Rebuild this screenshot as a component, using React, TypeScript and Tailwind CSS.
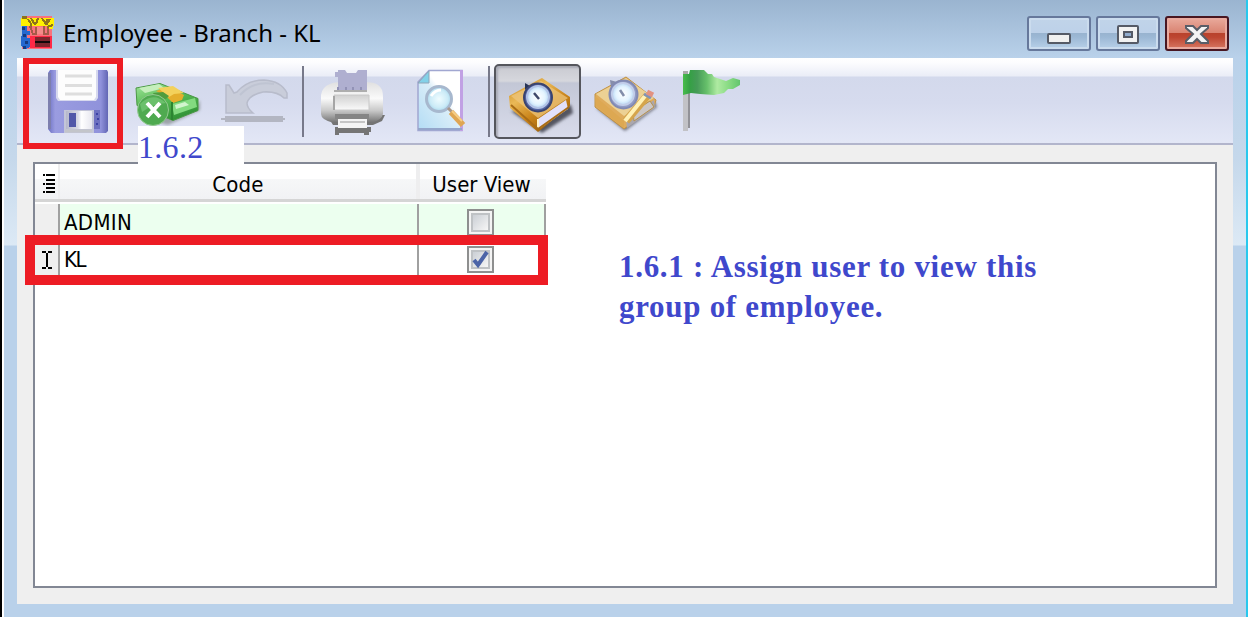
import React from "react";

const uiFont = "font-['DejaVu_Sans_Condensed','DejaVu_Sans',sans-serif] [font-stretch:condensed]";
const serif = "font-['Liberation_Serif',serif] text-[#3f48cc]";

function AppIcon() {
  return (
    <svg width="33" height="33" viewBox="21 16 33 33" shapeRendering="crispEdges">
      <rect x="22" y="16" width="30" height="33" fill="#f9727c" />
      <path d="M21 18h33v8H21zM46 24h7v5h-5z" fill="#fff000" />
      <path d="M23 18h3v-2h-3zM28 19l3 5v3M31 18l4 7M38 18l-2 6M42 18l3 5 3-4M50 19l-4 6M47 27l6-2" fill="none" stroke="#8f731a" strokeWidth="2" />
      <path d="M30 26l3 8h3v-7M44 26v8h4v-6" fill="none" stroke="#a35a48" strokeWidth="2" />
      <path d="M37 27h6v7h-6z" fill="#f58b8a" />
      <path d="M22 26h5v5h3v4h-3v3h3v9l-4 2-5-3z" fill="#2568cf" />
      <path d="M22 27h3v3h-3zM23 34h3v3h-3zM25 41h3v3h-3zM23 46h3v3h-3z" fill="#163a80" />
      <path d="M30 36h22v12H30z" fill="#ff2946" />
      <path d="M35 37h15v10H35z" fill="#7d252c" />
      <path d="M35 41h15v2H35z" fill="#12080a" />
    </svg>
  );
}

function Slot({ x, w, children }: { x: number; w: number; children: React.ReactNode }) {
  return (
    <svg className="shrink-0" width={w} height="85" viewBox={`${x} 58 ${w} 85`}>
      {children}
    </svg>
  );
}

function SaveIcon() {
  return (
    <Slot x={17} w={112}>
      <defs>
        <linearGradient id="disk" x2="1">
          <stop stopColor="#6c70c4" /><stop offset=".12" stopColor="#9a9ce0" /><stop offset=".88" stopColor="#9092db" /><stop offset="1" stopColor="#6266b4" />
        </linearGradient>
        <linearGradient id="shutter" x2="1">
          <stop stopColor="#b5b7cb" /><stop offset=".45" stopColor="#d9dae6" /><stop offset=".6" stopColor="#fff" /><stop offset="1" stopColor="#e8e8f0" />
        </linearGradient>
      </defs>
      <path d="M50 70h57l1 2v59l-2 2H51l-3-4V73z" fill="url(#disk)" />
      <path d="M48 73h3v56h-3z" fill="#7d7fae" />
      <path d="M56 70h42v28l-2 3H58l-2-3z" fill="#d7d9ee" />
      <path d="M58 70h38v27l-2 3H60l-2-3z" fill="#fdfdfd" />
      <path d="M65 76h27M65 85.500h27M65 94h27" stroke="#dedede" strokeWidth="3" />
      <path d="M64 110h30v23H64z" fill="#c3c5d8" />
      <path d="M66 111h26v18H66z" fill="url(#shutter)" />
      <rect x="69" y="113" width="7" height="14" fill="#5258a9" />
      <path d="M94 110h6v19h-6z" fill="#6d70c0" />
      <path d="M65 131h27" stroke="#c3c5ca" strokeWidth="3" />
      <path d="M96 114h2m-1 5h2m-3 5h2" stroke="#3c42a4" strokeWidth="2" />
    </Slot>
  );
}

function CancelIcon() {
  return (
    <Slot x={129} w={84}>
      <defs>
        <linearGradient id="cash" x2=".5" y2="1"><stop stopColor="#a3e69e" /><stop offset=".5" stopColor="#5abd57" /><stop offset="1" stopColor="#329437" /></linearGradient>
        <filter id="soft"><feGaussianBlur stdDeviation="1.600" /></filter>
      </defs>
      <path d="M140 118l28 7 32-15v-10l-8 12z" fill="#727a78" opacity=".6" filter="url(#soft)" />
      <path d="M136 88l24-4.500 38 15v12l-25 10-36-15z" fill="url(#cash)" stroke="#4b9845" />
      <path d="M139 88l20-4 5 4-19 5z" fill="#c5efbc" />
      <path d="M156 91l12-4 16 8-2 5-9 3-6-6z" fill="#e4ae2c" />
      <path d="M158 88l15-2 11 7-10 1-5 3z" fill="#f3d15b" />
      <path d="M153 93l10-1 6 4-3 3-11-2z" fill="#4f9c3d" />
      <path d="M172 104l23-6 2 9-23 8z" fill="#83da80" />
      <path d="M175 105l10-3 4 3-13 4z" fill="#d2f5ce" />
      <path d="M172 102v18" stroke="#2c8531" strokeWidth="2" />
      <circle cx="153" cy="110" r="15.500" fill="#4faa50" stroke="#93c990" />
      <path d="M140 104q13-13 26-1-14 1-24 9z" fill="#78c977" opacity=".7" />
      <path d="M147 103l13 14m0-14-13 14" stroke="#fff" strokeWidth="4" />
    </Slot>
  );
}

function UndoIcon() {
  return (
    <Slot x={213} w={89}>
      <path d="M226 85l3 0 5 8 3-1Q247 80 264 80q17 1 23 13v5h-3q-7-7-21-6-14 3-16 11 0 5 6 10H226z" fill="#c9cdda" stroke="#b8bccb" strokeWidth="1.500" />
      <path d="M240 95q14-15 34-11" stroke="#bfc4d2" fill="none" strokeWidth="2" />
      <path d="M221 118h4v-2h58v2h2v2h-2v2h-58v-2h-4z" fill="#b3b6c2" />
    </Slot>
  );
}

function PrinterIcon() {
  return (
    <Slot x={304} w={93}>
      <defs>
        <linearGradient id="printer" x2="0" y2="1"><stop stopColor="#e0e0e0" /><stop offset=".4" stopColor="#fafafa" /><stop offset=".7" stopColor="#c8c8c8" /><stop offset="1" stopColor="#707070" /></linearGradient>
        <linearGradient id="feed" x2="0" y2="1"><stop stopColor="#d0d0d0" /><stop offset="1" stopColor="#fafafa" /></linearGradient>
      </defs>
      <path d="M327 115h58l-3 6-9 4H333z" fill="#747474" />
      <path d="M330 84q3-2 14-2h19q12 0 15 3 5 3 5 12v17q-1 6-12 9h-37q-13-3-13-9V95q1-8 9-11z" fill="url(#printer)" />
      <path d="M335 72h3v-2h7l2 3h9l2-3h9v21h-29V77h-3z" fill="#afafd0" />
      <path d="M338 87v4m8-4v4m7-4v4m8-4v4" stroke="#9292b6" strokeWidth="2" />
      <path d="M334 91h33" stroke="#adadad" strokeWidth="2" />
      <path d="M334 95h35v15H334z" fill="url(#feed)" stroke="#c8c8c8" />
      <path d="M334 96v14" stroke="#a5a5a5" strokeWidth="2" />
      <path d="M335 114h34v5h-34z" fill="#858585" />
      <path d="M338 119h29v9h-29z" fill="#f4f4f4" />
      <path d="M340 122h25" stroke="#c5c5c5" strokeWidth="2" />
      <path d="M335 127h3v1h29v-1h4v5h-2v3h-5v-2h-25v2h-4z" fill="#757575" />
    </Slot>
  );
}

function PreviewIcon() {
  return (
    <Slot x={397} w={91}>
      <defs>
        <linearGradient id="page" x1="0" y1="1" x2="1" y2="0"><stop stopColor="#b2dcf5" /><stop offset=".5" stopColor="#d9edf8" /><stop offset=".6" stopColor="#fff" /><stop offset="1" stopColor="#fff" /></linearGradient>
        <radialGradient id="lens"><stop stopColor="#effcff" /><stop offset=".7" stopColor="#ccebf7" /><stop offset="1" stopColor="#a9d9ee" /></radialGradient>
      </defs>
      <path d="M429 70.500h33v60H418V82z" fill="url(#page)" stroke="#a1a7d1" strokeWidth="1.500" />
      <path d="M461.500 70v61" stroke="#c1a1e4" strokeWidth="3" />
      <path d="M418 129h44" stroke="#94a6cb" strokeWidth="2" />
      <path d="M429 71v12h-11z" fill="#83d1e8" stroke="#8ea5b8" />
      <circle cx="439" cy="99" r="12.500" fill="url(#lens)" stroke="#a7b8ce" strokeWidth="3" />
      <path d="M431 96q4-6 10-6" stroke="#fff" strokeWidth="3" fill="none" />
      <path d="M448 108l4 4" stroke="#a8978b" strokeWidth="3" />
      <path d="M451 112l12 13" stroke="#dfa653" strokeWidth="6" />
      <path d="M452 111l10 10" stroke="#f7ce85" strokeWidth="2" />
    </Slot>
  );
}

function BookIcon() {
  return (
    <svg width="83" height="71" viewBox="496 66 83 71">
      <defs>
        <linearGradient id="book" x2=".7" y2="1"><stop stopColor="#c38218" /><stop offset=".35" stopColor="#eab957" /><stop offset=".65" stopColor="#ca841a" /><stop offset="1" stopColor="#975b06" /></linearGradient>
        <radialGradient id="clock"><stop stopColor="#fff" /><stop offset=".65" stopColor="#e4f4ff" /><stop offset="1" stopColor="#b9d9f5" /></radialGradient>
      </defs>
      <path d="M511 111l31 22 31-20-2-8z" fill="#525460" filter="url(#soft)" />
      <path d="M509 96l29-16 4-2 28 19v9l-32 26-28-24z" fill="url(#book)" />
      <path d="M511 96l27 22 30-20-27-17" fill="#edc57c" opacity=".75" />
      <path d="M538 119l28-19 2 9-29 20z" fill="#e2e0fa" />
      <path d="M538 119v10" stroke="#fff3c9" strokeWidth="2" />
      <path d="M511 105l27 24 31-22" stroke="#a96c16" strokeWidth="2" fill="none" />
      <path d="M525 83l5 3-5 4z" fill="#283457" />
      <circle cx="538" cy="97.500" r="14" fill="#5263a1" stroke="#3b446f" strokeWidth="2" />
      <circle cx="538" cy="97" r="11" fill="url(#clock)" stroke="#b3c3e6" strokeWidth="2" />
      <path d="M534 93l5 6" stroke="#3d486a" strokeWidth="2.500" />
    </svg>
  );
}

function BookPencilIcon() {
  return (
    <Slot x={581} w={88}>
      <path d="M596 108l29 23 32-24-2-5z" fill="#747681" filter="url(#soft)" />
      <path d="M595 94l31-17 30 23-2 7-30 22-29-22z" fill="#dfac5c" stroke="#c19345" />
      <path d="M596 94l30-16 28 20-30 18z" fill="#ecd194" />
      <path d="M595 96l29 25v7l-28-22z" fill="#dda852" />
      <path d="M626 119l28-19 1 8-28 20z" fill="#aaa7ae" />
      <path d="M633 112l17-11 4 6-20 14z" fill="#ccc7c6" stroke="#b5904d" />
      <path d="M626 121l21-25" stroke="#d5a54c" strokeWidth="8" />
      <path d="M625 121l20-25" stroke="#fff1b5" strokeWidth="4" />
      <path d="M644 94l7 4" stroke="#8194b5" strokeWidth="3" />
      <path d="M647 92l6 3" stroke="#e29282" strokeWidth="5" />
      <path d="M610 80l7 2-6 6z" fill="#878eab" />
      <circle cx="623.500" cy="94.500" r="14" fill="#929cc5" stroke="#828ab2" strokeWidth="2" />
      <circle cx="623" cy="94" r="11" fill="url(#clock)" stroke="#c3cfea" strokeWidth="2" />
      <path d="M620 90l4 6" stroke="#838eaa" strokeWidth="2.500" />
    </Slot>
  );
}

function FlagIcon() {
  return (
    <Slot x={669} w={91}>
      <defs>
        <linearGradient id="flag" x2="1"><stop stopColor="#48bd4b" /><stop offset=".12" stopColor="#35a045" /><stop offset=".25" stopColor="#469b58" /><stop offset=".42" stopColor="#67c06b" /><stop offset=".6" stopColor="#afeaa2" /><stop offset=".8" stopColor="#88db83" /><stop offset="1" stopColor="#63c56e" /></linearGradient>
      </defs>
      <path d="M685.500 71v60" stroke="#c2c2c6" strokeWidth="5" />
      <path d="M689 77v51" stroke="#929298" strokeWidth="2" />
      <path d="M683 74h6l1-4h14l4 4h4l2 3 12 4 7-3 7 2v5l-7 4h-5l-4 4-10 2-14-1-9-1-8 2z" fill="url(#flag)" />
      <path d="M683 71h5v3h-5z" fill="#aaa" />
    </Slot>
  );
}

function CaptionButton({ kind }: { kind: "min" | "max" | "close" }) {
  const close = kind === "close";
  return (
    <div
      className={
        "flex h-[35px] w-[64px] items-center justify-center rounded-[3px] border-2 " +
        (close
          ? "border-[#481722] bg-[linear-gradient(#e9aa9c_0%,#d98371_48%,#b8422c_49%,#bd4631_62%,#d87863_100%)] shadow-[inset_0_0_0_2px_#e9aa9f]"
          : "border-[#66789b] bg-[linear-gradient(#c1d4e9_0%,#bdd1e9_48%,#98b3cf_49%,#9cb8d5_62%,#b9d1e9_100%)] shadow-[inset_0_0_0_2px_#cbdcee]")
      }
    >
      <svg width="26" height="22" viewBox="0 0 26 22">
        {kind === "min" && <rect x="2" y="11" width="22" height="9" rx="1" fill="#f0f0f0" stroke="#555a66" strokeWidth="2" />}
        {kind === "max" && (
          <>
            <rect x="3" y="3" width="20" height="17" rx="1" fill="#f2f2f2" stroke="#555a66" strokeWidth="2" />
            <rect x="9" y="9" width="8" height="5" fill="#91acce" stroke="#555a66" strokeWidth="2" />
          </>
        )}
        {kind === "close" && <path d="M2 3h7l4 4 4-4h7v2l-7 6 7 7v2h-7l-4-4-4 4H2v-2l7-7-7-6z" fill="#f4f4f4" stroke="#595d67" strokeWidth="2" />}
      </svg>
    </div>
  );
}

function CheckBox({ checked }: { checked?: boolean }) {
  return (
    <div className="flex h-[27px] w-[27px] items-center justify-center border-2 border-[#8e8f8f] bg-[#f4f4f4]">
      <div className="flex h-[19px] w-[19px] items-center justify-center border-2 border-[#bfc2c5] bg-linear-to-br from-[#cbcfd5] to-[#f6f6f6]">
        {checked && (
          <svg className="shrink-0 overflow-visible" width="16" height="18" viewBox="0 0 16 18">
            <path d="M1 10l4 5L14 2" fill="none" stroke="#4b63a7" strokeWidth="4" />
          </svg>
        )}
      </div>
    </div>
  );
}

const headBg = "bg-[linear-gradient(#fff_0%,#fff_42%,#f6f7f8_43%,#f1f2f4_100%)]";

export default function App() {
  return (
    <div className="relative flex h-[617px] w-[1248px] overflow-hidden bg-[#b9d1ea] text-black">
      <div className="w-[2px] bg-black" />
      <div className="w-[2px] bg-white" />
      <div className="flex w-[1242px] flex-col">
        <header className="flex h-[58px] shrink-0 items-start bg-linear-to-b from-[#9ab4d0] to-[#b9d1ea] pl-[17px] pt-4">
          <AppIcon />
          <h1 className="ml-[9px] -mt-px w-[300px] whitespace-nowrap font-['Noto_Sans',sans-serif] text-[24px] leading-[36px]">Employee - Branch - KL</h1>
          <div className="ml-auto mr-[17px] flex gap-[5px]">
            <CaptionButton kind="min" />
            <CaptionButton kind="max" />
            <CaptionButton kind="close" />
          </div>
        </header>
        <div className="flex h-[559px]">
          <div className="w-[13px] bg-[linear-gradient(#b9d1ea_0px,#c5d8eb_100px,#dce9f5_187px,#b9d1ea_188px)]" />
          <div className="flex h-[546px] w-[1216px] flex-col bg-[#efefef]">
            <div className="flex h-[87px] shrink-0 border-b-2 border-[#b2b5cc] bg-[linear-gradient(#fff_0px,#fcfcfe_5px,#eaedf7_18px,#d3d9ec_19px,#d6dbee_45px,#e3e7f6_85px)]">
              <SaveIcon />
              <CancelIcon />
              <UndoIcon />
              <div className="mt-2 h-[71px] w-[2px] bg-[#77798a]" />
              <PrinterIcon />
              <PreviewIcon />
              <div className="mt-2 h-[71px] w-[2px] bg-[#77798a]" />
              <div className="ml-1 mt-[6px] h-[75px] w-[87px] shrink-0 rounded-[5px] border-2 border-[#55565d] bg-[linear-gradient(#c9cad1_0px,#d6d7dd_15px,#c3c7d6_17px,#d8dbea_70px)] shadow-[inset_2px_2px_2px_#aaacb7]">
                <BookIcon />
              </div>
              <BookPencilIcon />
              <FlagIcon />
            </div>
            <main className="ml-4 mt-[17px] flex h-[426px] w-[1184px] border-2 border-[#828794] bg-white">
              <div className={`w-[511px] text-[22px] ${uiFont}`}>
                <div className="flex h-[38px] border-b-[3px] border-[#d5d5d5]">
                  <div className={`flex w-[23px] items-start justify-end pr-[3px] pt-[10px] ${headBg}`}>
                    <svg width="13" height="20" viewBox="0 0 13 20" shapeRendering="crispEdges">
                      <path d="M4 1h9M4 6h9M4 10h9M4 14h9M4 18h9" stroke="#000" strokeWidth="2" />
                      <path d="M1 1h2M1 10h2M1 18h2" stroke="#000" strokeWidth="2" />
                    </svg>
                  </div>
                  <div className="w-[2px] bg-[#eeeeef]" />
                  <div className={`w-[356px] text-center leading-[41px] tracking-[0.2px] ${headBg}`}>Code</div>
                  <div className="w-[4px] bg-[#eeeeef]" />
                  <div className={`w-[126px] whitespace-nowrap pr-[3px] text-center leading-[41px] ${headBg}`}>User View</div>
                </div>
                <div className="mt-[2px] flex h-[37px] bg-[#ecffef]">
                  <div className="w-[25px] border-r-2 border-[#a0a0a0] bg-[#efefef]" />
                  <div className="w-[359px] border-r-2 border-[#a0a0a0] pl-1 leading-[37px] tracking-[0.3px]">ADMIN</div>
                  <div className="flex w-[127px] items-center justify-center border-r-2 border-[#a0a0a0] pb-px pr-[2px]"><CheckBox /></div>
                </div>
                <div className="flex h-[38px] bg-white">
                  <div className="flex w-[25px] items-center justify-center border-r-2 border-[#a0a0a0] bg-[#efefef]">
                    <svg width="12" height="18" viewBox="0 0 12 18" shapeRendering="crispEdges"><path d="M1 1h4m2 0h4M1 17h4m2 0h4M6 2v14" stroke="#000" strokeWidth="2" /></svg>
                  </div>
                  <div className="w-[359px] border-r-2 border-[#a0a0a0] pl-1 leading-[37px] tracking-[-1.5px]">KL</div>
                  <div className="flex w-[127px] items-center justify-center border-r-2 border-[#a0a0a0] pb-[2px] pr-[2px]"><CheckBox checked /></div>
                </div>
              </div>
              <p className={`ml-[73px] mt-[83px] whitespace-nowrap text-[31px] font-bold leading-[40px] tracking-[0.7px] ${serif}`}>
                1.6.1 : Assign user to view this<br />group of employee.
              </p>
            </main>
          </div>
          <div className="w-[13px] bg-[linear-gradient(#b9d1ea_0px,#c5d8eb_100px,#dce9f5_187px,#b9d1ea_188px)]" />
        </div>
      </div>
      <div className="w-[2px] bg-[#28c8ed]" />

      <div className="absolute left-[23px] top-[58px] h-[91px] w-[100px] border-[6px] border-[#ed1c24]" />
      <div className="absolute left-[25px] top-[235px] h-[50px] w-[523px] border-[10px] border-[#ed1c24]" />
      <div className={`absolute left-[138px] top-[126px] h-[38px] w-[106px] bg-white text-[32px] leading-[42px] tracking-[0.3px] ${serif}`}>1.6.2</div>
    </div>
  );
}
